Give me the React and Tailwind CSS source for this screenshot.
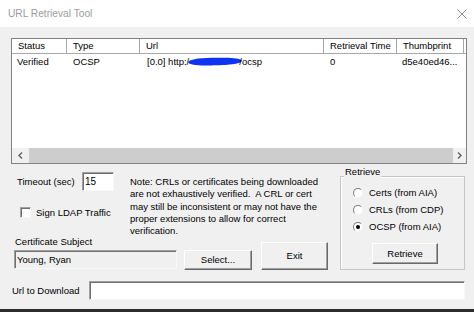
import React from 'react';

const sunken = "border border-t-[#a0a0a0] border-l-[#a0a0a0] border-r-[#f8f8f8] border-b-[#f8f8f8] shadow-[inset_1px_1px_0_#6f6f6f]";
const raised = "border border-t-white border-l-white border-r-[#696969] border-b-[#696969] shadow-[inset_-1px_-1px_0_#a0a0a0] bg-[#f0f0f0] flex items-center justify-center";

const columns = [
  { label: "Status", w: "w-[55px]" },
  { label: "Type", w: "w-[73px]" },
  { label: "Url", w: "w-[184px]" },
  { label: "Retrieval Time", w: "w-[73px]" },
  { label: "Thumbprint", w: "w-[67px]" },
];

const Radio = ({ label, checked }) => (
  <div className="flex items-center h-[13px]">
    <div className="ml-[12px] w-[10px] h-[10px] rounded-full bg-white border border-t-[#7d7d7d] border-l-[#7d7d7d] border-r-[#f4f4f4] border-b-[#f4f4f4] flex items-center justify-center">
      {checked && <div className="w-[4px] h-[4px] rounded-full bg-black" />}
    </div>
    <span className="ml-[6px]">{label}</span>
  </div>
);

export default function App() {
  return (
    <div className="w-[474px] h-[312px] overflow-hidden flex flex-col bg-[#f0f0f0] font-['Liberation_Sans',Arial,sans-serif] text-[9.5px] leading-[12px] text-black">
      {/* title bar */}
      <div className="h-[27px] shrink-0 bg-white flex items-center pl-[8px] pr-[7px] text-[10.2px] text-[#9b9b9b]">
        <span>URL Retrieval Tool</span>
        <svg className="ml-auto" width="10" height="10" viewBox="0 0 10 10">
          <path d="M0.5 0.5L9.5 9.5M9.5 0.5L0.5 9.5" stroke="#8a8a8a" strokeWidth="1" />
        </svg>
      </div>

      {/* body */}
      <div className="flex-1 flex flex-col pl-[11px] pr-[7px] pt-[11px]">
        {/* list view */}
        <div className="h-[126px] shrink-0 border border-[#828282] bg-white flex flex-col">
          <div className="flex h-[15px] shrink-0 border-b border-[#a8a8a8]">
            {columns.map(c => (
              <div key={c.label} className={`${c.w} shrink-0 border-r border-[#a8a8a8] pl-[6px] flex items-center`}>
                {c.label}
              </div>
            ))}
          </div>
          <div className="flex h-[15px] shrink-0 items-center">
            <div className="w-[55px] shrink-0 pl-[5px]">Verified</div>
            <div className="w-[73px] shrink-0 pl-[6px]">OCSP</div>
            <div className="w-[184px] shrink-0 pl-[7px] flex items-center whitespace-nowrap">
              <span>[0.0] http:/</span>
              <svg className="ml-[-2px] shrink-0" width="56" height="11" viewBox="0 0 56 11">
                <path d="M1 6 C 4 2, 20 1.5, 38 1.8 C 47 2, 53 2.5, 55 4.5 C 54 8.5, 40 9.2, 24 9.4 C 12 9.6, 2 9.5, 1 6 Z" fill="#0f33f0" />
              </svg>
              <span className="ml-[-4px]">/ocsp</span>
            </div>
            <div className="w-[73px] shrink-0 pl-[6px]">0</div>
            <div className="w-[67px] shrink-0 pl-[5px] whitespace-nowrap">d5e40ed46...</div>
          </div>
          <div className="flex-1" />
          {/* horizontal scrollbar */}
          <div className="h-[15px] shrink-0 flex bg-[#f0f0f0]">
            <div className="w-[17px] flex items-center justify-center">
              <svg width="5" height="7" viewBox="0 0 5 7">
                <path d="M4 0.5L1 3.5L4 6.5" stroke="#606060" strokeWidth="1.4" fill="none" />
              </svg>
            </div>
            <div className="flex-1 bg-[#cdcdcd]" />
            <div className="w-[13px] flex items-center justify-center">
              <svg width="5" height="7" viewBox="0 0 5 7">
                <path d="M1 0.5L4 3.5L1 6.5" stroke="#606060" strokeWidth="1.4" fill="none" />
              </svg>
            </div>
          </div>
        </div>

        {/* controls */}
        <div className="flex pt-[8px]">
          <div className="w-[329px] shrink-0 flex flex-col">
            <div className="flex h-[64px]">
              <div className="w-[119px] shrink-0 flex flex-col">
                <div className="flex items-center h-[19px] pl-[6px]">
                  <span className="w-[65px] shrink-0">Timeout (sec)</span>
                  <div className={`w-[32px] h-[19px] bg-white ${sunken} pl-[2px] flex items-center text-[10px]`}>15</div>
                </div>
                <div className="flex items-center h-[13px] mt-[15px] pl-[9px]">
                  <div className={`w-[11px] h-[11px] bg-white ${sunken}`} />
                  <span className="ml-[5px] whitespace-nowrap">Sign LDAP Traffic</span>
                </div>
              </div>
              <div className="mt-[4px] leading-[12.3px] whitespace-pre">
                <div>Note: CRLs or certificates being downloaded</div>
                <div>are not exhaustively verified.  A CRL or cert</div>
                <div>may still be inconsistent or may not have the</div>
                <div>proper extensions to allow for correct</div>
                <div>verification.</div>
              </div>
            </div>
            <div className="flex h-[34px] items-start">
              <div className="ml-[3px] w-[163px] shrink-0 flex flex-col">
                <span className="pl-[1px] leading-[11px]">Certificate Subject</span>
                <div className={`mt-[3px] h-[19px] bg-[#f0f0f0] ${sunken} pl-[2px] flex items-center`}>Young, Ryan</div>
              </div>
              <button className={`ml-[7px] mt-[14px] w-[68px] h-[20px] ${raised}`}>Select...</button>
              <button className={`ml-[9px] mt-[6px] w-[67px] h-[28px] ${raised}`}>Exit</button>
            </div>
          </div>

          {/* Retrieve group */}
          <div className="relative mt-[4px] w-[125px] h-[94px] border border-[#c6c6c6] shadow-[inset_1px_1px_0_#ffffff] flex flex-col pt-[9px]">
            <span className="absolute left-[3px] top-[-11px] px-[1px] bg-[#f0f0f0]">Retrieve</span>
            <div className="flex flex-col gap-[4px]">
              <Radio label="Certs (from AIA)" />
              <Radio label="CRLs (from CDP)" />
              <Radio label="OCSP (from AIA)" checked />
            </div>
            <button className={`mt-[10px] ml-[31px] w-[66px] h-[21px] ${raised}`}>Retrieve</button>
          </div>
        </div>

        {/* url to download */}
        <div className="flex items-center h-[19px] mt-[11px]">
          <span className="ml-[1px] w-[77px] shrink-0">Url to Download</span>
          <div className={`flex-1 mr-[2px] h-[19px] bg-white ${sunken}`} />
        </div>
      </div>

      <div className="h-[3px] shrink-0 bg-[#2e2e2e]" />
    </div>
  );
}
